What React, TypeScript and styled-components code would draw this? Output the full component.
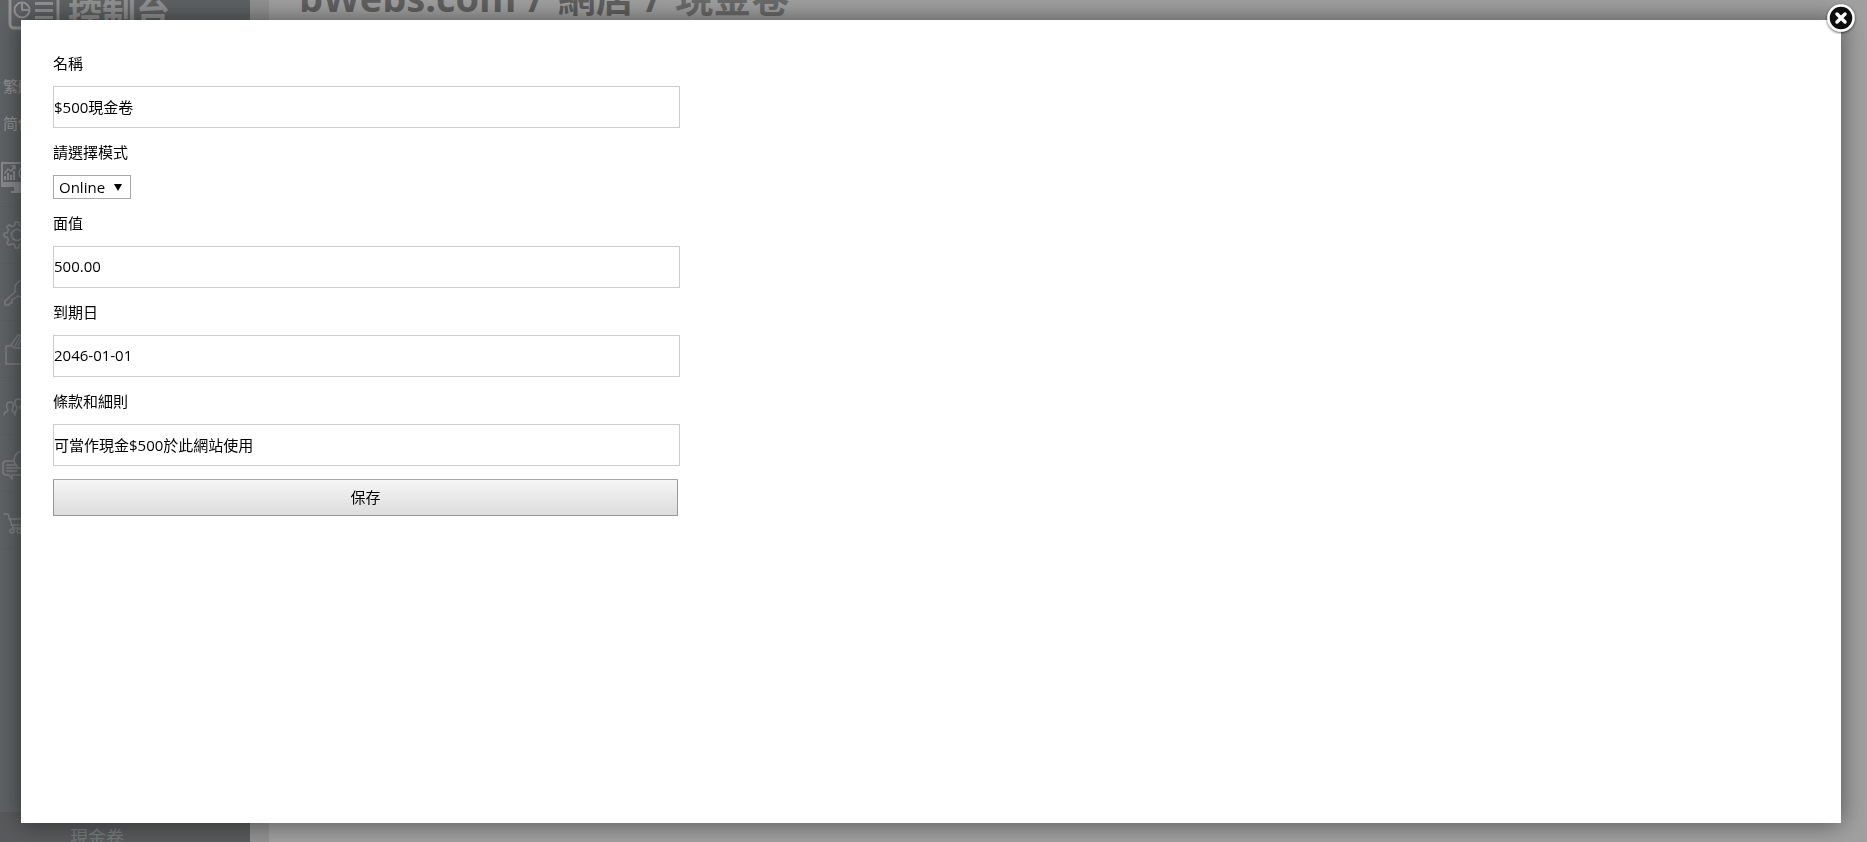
import React from "react";
import styled, { createGlobalStyle } from "styled-components";

const GlobalStyle = createGlobalStyle`
  *, *::before, *::after { box-sizing: border-box; }
  body {
    margin: 0;
    color: #000;
    background: #fff;
    font: 15px/20px "Open Sans", "Noto Sans CJK TC", sans-serif;
    overflow: hidden;
  }
  input, select, button { font: inherit; color: inherit; }
`;

const Page = styled.div`
  display: flex;
  height: 100vh;
`;

const Sidebar = styled.aside`
  display: flex;
  flex-direction: column;
  flex: 0 0 250px;
  overflow: hidden;
  background: #263238;
  color: #fff;
`;

const Brand = styled.div`
  display: flex;
  align-items: flex-start;
  gap: 8px;
  height: 32px;
  margin-bottom: 36px;
  padding-left: 8px;
  font-size: 34px;
  line-height: 26px;
  font-weight: 700;
  color: #d0d0d0;
`;

const LanguageLink = styled.a`
  height: 37px;
  padding-left: 3px;
  font-size: 15px;
  line-height: 37px;
  color: #ccc;
  text-decoration: none;
`;

const Nav = styled.nav`
  display: flex;
  flex-direction: column;
  margin-top: 8px;
`;

const NavItem = styled.a<{ $active?: boolean }>`
  display: flex;
  align-items: center;
  height: 57px;
  border-bottom: 1px solid #1c262b;
  color: ${(p) => (p.$active ? "#aeb4b8" : "#8a9398")};
`;

const SubMenu = styled.div`
  height: 30px;
  margin-top: auto;
  padding: 13px 0 0 70px;
  background: #14171a;
`;

const SubMenuLink = styled.a`
  font-size: 18px;
  line-height: 24px;
  color: #6f8089;
  text-decoration: none;
`;

const Gutter = styled.div`
  flex: 0 0 19px;
  background: #cfcfcf;
`;

const Main = styled.main`
  flex: 1;
  min-width: 0;
  padding-left: 30px;
  overflow: hidden;
`;

const Breadcrumb = styled.h1`
  margin: -27px 0 0;
  font-size: 38px;
  line-height: 48px;
  font-weight: 700;
  color: #2a2a2a;
  white-space: nowrap;
`;

const Separator = styled.span`
  margin: 0 4px 0 2px;
`;

const Current = styled.span`
  color: #4d4d4d;
`;

const Overlay = styled.div`
  position: fixed;
  inset: 0;
  display: flex;
  padding: 20px 26px 19px 21px;
  background: rgba(119, 119, 119, 0.7);
`;

const Dialog = styled.section`
  position: relative;
  flex: 1;
  padding: 19px 32px;
  background: #fff;
  box-shadow: 0 0 24px rgba(0, 0, 0, 0.5);
`;

const CloseButton = styled.button`
  position: absolute;
  top: -18px;
  right: -16px;
  display: flex;
  width: 32px;
  height: 32px;
  padding: 0;
  border: 0;
  background: none;
  cursor: pointer;
`;

const Form = styled.form`
  display: flex;
  flex-direction: column;
  align-items: flex-start;
  width: 627px;
  max-width: 100%;
`;

const Label = styled.label`
  padding: 14px 0 13px;
`;

const TextInput = styled.input`
  width: 100%;
  height: 42px;
  padding: 0 0 2px;
  border: 1px solid #ccc;
  border-radius: 0;
  background: #fff;
`;

const SelectBox = styled.div`
  display: grid;
  align-items: center;
  width: 78px;
  height: 24px;

  > * { grid-area: 1 / 1; }
  > svg { justify-self: end; margin-right: 9px; pointer-events: none; }
`;

const Select = styled.select`
  appearance: none;
  width: 100%;
  height: 24px;
  padding: 0 0 1px 5px;
  border: 1px solid #a9a9a9;
  border-radius: 0;
  background: #fff;
`;

const SaveButton = styled.button`
  width: calc(100% - 2px);
  height: 37px;
  margin-top: 13px;
  padding: 0 0 2px;
  border: 1px solid #979797;
  border-top-color: #a9a9a9;
  border-radius: 1px;
  background: linear-gradient(#f6f6f6, #dcdcdc);
`;

const Icon = styled.svg`
  flex: none;
  fill: none;
  stroke: currentColor;
  stroke-width: 1.5;
  stroke-linejoin: round;
  stroke-linecap: round;
`;

const gearOutline = (cx: number, cy: number, inner: number, outer: number, teeth: number) => {
  const step = (Math.PI * 2) / teeth;
  const points: string[] = [];
  for (let i = 0; i < teeth; i++) {
    const at = i * step;
    [
      [inner, -0.28],
      [outer, -0.17],
      [outer, 0.17],
      [inner, 0.28],
    ].forEach(([r, offset]) => {
      const a = at + offset * step;
      points.push(`${(cx + r * Math.cos(a)).toFixed(2)},${(cy + r * Math.sin(a)).toFixed(2)}`);
    });
  }
  return points.join(" ");
};

const LogoIcon = () => (
  <Icon width="52" height="32" viewBox="0 0 52 32" aria-hidden="true">
    <rect x="2" y="-12" width="48" height="40" rx="4" strokeWidth="3" />
    <circle cx="14" cy="10" r="7.5" strokeWidth="2" />
    <path d="M14 3V10H21" strokeWidth="2" />
    <path d="M27 3.500H45M27 10.500H45M27 17.500H45" strokeWidth="3" strokeLinecap="butt" />
  </Icon>
);

const icons: { name: string; drawing: React.ReactNode }[] = [
  {
    name: "統計",
    drawing: (
      <>
        <path d="M34 6H2V29H34" strokeWidth="2" />
        <path d="M2 25H34V30H2ZM14 30H24V34H27V36H11V34H14Z" fill="currentColor" stroke="none" />
        <path d="M5 16L8 12L11 14L15 9M12 9H15V12" />
        <path d="M5 23V19M8 23V16M11 23V18M14 23V14" strokeWidth="2" strokeLinecap="butt" />
        <circle cx="25" cy="16" r="6" />
      </>
    ),
  },
  {
    name: "設定",
    drawing: (
      <>
        <polygon points={gearOutline(17, 21, 10, 13, 8)} />
        <circle cx="17" cy="21" r="5.5" />
      </>
    ),
  },
  {
    name: "權限",
    drawing: (
      <>
        <path d="M15 21L5 30V34H9L10 32H12V29L18 25" />
        <path d="M18 25C24 28 32 24 31 17C30 8 17 7 15 16L15 21" />
      </>
    ),
  },
  {
    name: "文件",
    drawing: (
      <>
        <path d="M34 20H14L12 18H6V36H34" />
        <path d="M11 17L18 7H21L15 18M18 18L24 7M22 18L28 9" />
      </>
    ),
  },
  {
    name: "會員",
    drawing: (
      <>
        <path d="M4 30C4 26 8 27 8 25C5 21 7 17 10 17C14 17 14 21 12 25C12 27 15 27 15 30" />
        <path d="M15 28C15 25 18 26 17 22C13 18 15 14 18 14C23 14 23 18 20 22C20 26 24 24 25 28" />
      </>
    ),
  },
  {
    name: "訊息",
    drawing: (
      <>
        <path d="M14 19H6Q3 19 3 22V30Q3 33 6 33H9L12 37V33H20Q23 33 23 30V27" />
        <path d="M7 23H17M7 26H19M7 29H17" />
        <circle cx="23" cy="18" r="9" />
      </>
    ),
  },
  {
    name: "網店",
    drawing: (
      <>
        <path d="M4 15H8L13 29H30M9 20H32L29 26H11" />
        <circle cx="12" cy="32" r="2" />
        <circle cx="19" cy="32" r="2" />
      </>
    ),
  },
];

const CloseIcon = () => (
  <svg width="32" height="32" viewBox="0 0 32 32" aria-hidden="true">
    <defs>
      <filter id="badge-shadow" x="-30%" y="-30%" width="160%" height="160%">
        <feDropShadow dx="0" dy="1" stdDeviation="1.500" floodOpacity="0.7" />
      </filter>
    </defs>
    <circle cx="16" cy="16" r="12.500" fill="#090909" stroke="#fff" strokeWidth="2.500" filter="url(#badge-shadow)" />
    <path d="M12 12L20 20M20 12L12 20" stroke="#fff" strokeWidth="3.500" strokeLinecap="round" />
  </svg>
);

const App = () => (
  <>
    <GlobalStyle />
    <Page>
      <Sidebar>
        <Brand>
          <LogoIcon />
          控制台
        </Brand>
        <LanguageLink href="#zh-hant">繁體</LanguageLink>
        <LanguageLink href="#zh-hans">简体</LanguageLink>
        <Nav>
          {icons.map(({ name, drawing }, i) => (
            <NavItem key={name} href={`#section-${i + 1}`} aria-label={name} $active={i === 0}>
              <Icon width="36" height="42" viewBox="0 0 36 42" aria-hidden="true">
                {drawing}
              </Icon>
            </NavItem>
          ))}
        </Nav>
        <SubMenu>
          <SubMenuLink href="#coupons">現金卷</SubMenuLink>
        </SubMenu>
      </Sidebar>
      <Gutter />
      <Main>
        <Breadcrumb>
          bWebs.com <Separator>/</Separator> 網店 <Separator>/</Separator> <Current>現金卷</Current>
        </Breadcrumb>
      </Main>
    </Page>
    <Overlay>
      <Dialog role="dialog" aria-modal="true">
        <CloseButton type="button" aria-label="關閉">
          <CloseIcon />
        </CloseButton>
        <Form onSubmit={(e) => e.preventDefault()}>
          <Label htmlFor="name">名稱</Label>
          <TextInput id="name" type="text" defaultValue="$500現金卷" />
          <Label htmlFor="mode">請選擇模式</Label>
          <SelectBox>
            <Select id="mode" defaultValue="online">
              <option value="online">Online</option>
            </Select>
            <svg width="8" height="7" viewBox="0 0 8 7" aria-hidden="true">
              <path d="M0 0H8L4 7Z" fill="#000" />
            </svg>
          </SelectBox>
          <Label htmlFor="value">面值</Label>
          <TextInput id="value" type="text" defaultValue="500.00" />
          <Label htmlFor="expiry">到期日</Label>
          <TextInput id="expiry" type="text" defaultValue="2046-01-01" />
          <Label htmlFor="terms">條款和細則</Label>
          <TextInput id="terms" type="text" defaultValue="可當作現金$500於此網站使用" />
          <SaveButton type="submit">保存</SaveButton>
        </Form>
      </Dialog>
    </Overlay>
  </>
);

export default App;
